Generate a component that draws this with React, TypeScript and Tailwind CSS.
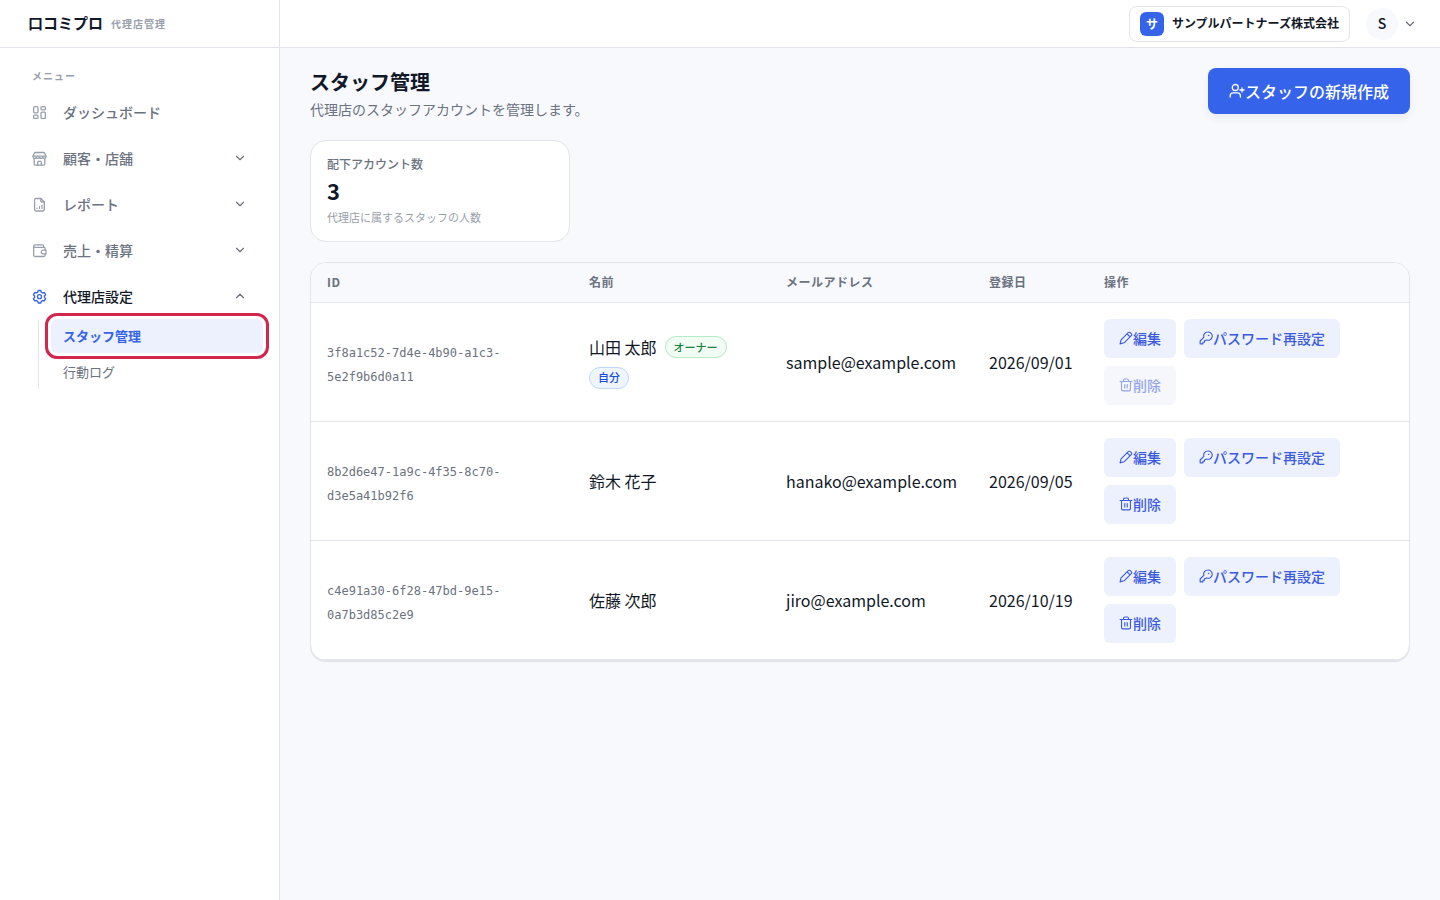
import type { ReactNode } from "react";
import clsx from "clsx";

type IconProps = { className?: string };

const Svg = ({ className, children }: IconProps & { children: ReactNode }) => (
  <svg
    xmlns="http://www.w3.org/2000/svg"
    className={clsx("shrink-0", className)}
    viewBox="0 0 16 16"
    fill="none"
    stroke="currentColor"
    strokeWidth={1.3}
    strokeLinecap="round"
    strokeLinejoin="round"
  >
    {children}
  </svg>
);

const DashboardIcon = ({ className }: IconProps) => (
  <Svg className={className}>
    <rect x="1.6" y="1.6" width="4.4" height="6.2" rx="1" />
    <rect x="1.6" y="10.2" width="4.4" height="3.2" rx="1" />
    <rect x="9" y="1.6" width="4.4" height="3.2" rx="1" />
    <rect x="9" y="7.2" width="4.4" height="6.2" rx="1" />
  </Svg>
);

const StoreIcon = ({ className }: IconProps) => (
  <Svg className={className}>
    <path d="M3.6 1.500h7.800a1.500 1.500 0 0 1 1.300.8l1.300 2.900v.6a1.600 1.600 0 0 1-3.200 0 1.650 1.650 0 0 1-3.300 0 1.650 1.650 0 0 1-3.300 0 1.600 1.600 0 0 1-3.200 0v-.6l1.300-2.900a1.500 1.500 0 0 1 1.300-.8z" />
    <path d="M1.200 5.200h12.600" />
    <path d="M2.200 8v4.700a1.400 1.400 0 0 0 1.400 1.400h7.800a1.400 1.400 0 0 0 1.400-1.400V8" />
    <path d="M5.700 14v-2.700a.9.9 0 0 1 .9-.9h1.800a.9.9 0 0 1 .9.9V14" />
  </Svg>
);

const ReportIcon = ({ className }: IconProps) => (
  <Svg className={className}>
    <path d="M8.800 1.500H4a1.400 1.400 0 0 0-1.400 1.400v9.700A1.400 1.400 0 0 0 4 14h6.900a1.400 1.400 0 0 0 1.400-1.400V5z" />
    <path d="M8.800 1.500V4a1 1 0 0 0 1 1h2.500" />
    <path d="M5 11.500v-.5M7.500 11.500V9.600M10 11.500V8.100" strokeWidth={1.2} />
  </Svg>
);

const WalletIcon = ({ className }: IconProps) => (
  <Svg className={className}>
    <path d="M13.200 6.800V5.700a1.400 1.400 0 0 0-1.400-1.400H1.700v7.800a1.400 1.400 0 0 0 1.400 1.400h8.700a1.400 1.400 0 0 0 1.400-1.400V11" />
    <path d="M1.700 4.300V3.100a1.300 1.300 0 0 1 1.300-1.300h7.400a1.300 1.300 0 0 1 1.300 1.300v1.200" />
    <path d="M14 7.100h-2.800a1.900 1.900 0 0 0 0 3.800H14z" />
  </Svg>
);

const GearIcon = ({ className }: IconProps) => (
  <Svg className={className}>
    <path d="M6.200 1.500h2.600l.5 1.700 1.200.7 1.800-.4 1.300 2.200-1.200 1.300v1.400l1.200 1.300-1.300 2.200-1.800-.4-1.200.7-.5 1.800H6.200l-.5-1.800-1.200-.7-1.800.4-1.300-2.200 1.200-1.300V7L1.400 5.700l1.300-2.200 1.800.4 1.200-.7z" />
    <circle cx="7.500" cy="7.700" r="2" />
  </Svg>
);

const UserPlusIcon = ({ className }: IconProps) => (
  <Svg className={className}>
    <circle cx="6.300" cy="4.500" r="3" />
    <path d="M1.200 14v-1.200a3 3 0 0 1 3-3h4.200a3 3 0 0 1 3 3V14" />
    <path d="M13 4.900v4.200M10.900 7h4.200" />
  </Svg>
);

const PencilIcon = ({ className }: IconProps) => (
  <Svg className={className}>
    <path d="M1.200 14.700l1.200-4.600 8.200-8.200a1.600 1.600 0 0 1 2.300 0l1.100 1.100a1.600 1.600 0 0 1 0 2.300l-8.200 8.200z" />
    <path d="M9.600 3.600l2.800 2.800" />
  </Svg>
);

const KeyIcon = ({ className }: IconProps) => (
  <Svg className={className}>
    <path d="M10 1.200a4.700 4.700 0 0 0-4.500 6L1.300 11.400v3.300h3.200v-1.800h1.800v-1.700L8.800 10.300a4.700 4.700 0 1 0 1.200-9.100z" />
    <path d="M11 5h.1" strokeWidth={1.7} />
  </Svg>
);

const TrashIcon = ({ className }: IconProps) => (
  <Svg className={className}>
    <path d="M1.200 4h13.600" />
    <path d="M2.900 4v9.100a1.600 1.600 0 0 0 1.600 1.600h7a1.600 1.600 0 0 0 1.600-1.600V4" />
    <path d="M5.200 4V2.500a1.300 1.300 0 0 1 1.300-1.300h3a1.300 1.300 0 0 1 1.300 1.300V4" />
    <path d="M6.600 7.400v4M9.400 7.400v4" />
  </Svg>
);

const ChevronIcon = ({ className }: IconProps) => (
  <svg
    xmlns="http://www.w3.org/2000/svg"
    className={clsx("h-2.5 w-2.5 shrink-0 text-[#6b7280]", className)}
    viewBox="0 0 10 10"
    fill="none"
    stroke="currentColor"
    strokeWidth={1.25}
    strokeLinecap="round"
    strokeLinejoin="round"
  >
    <path d="M1.500 3.300L5 6.700l3.500-3.400" />
  </svg>
);

const menu = [
  { label: "ダッシュボード", icon: DashboardIcon, expandable: false, open: false },
  { label: "顧客・店舗", icon: StoreIcon, expandable: true, open: false },
  { label: "レポート", icon: ReportIcon, expandable: true, open: false },
  { label: "売上・精算", icon: WalletIcon, expandable: true, open: false },
  { label: "代理店設定", icon: GearIcon, expandable: true, open: true },
];

const staff = [
  {
    id: "3f8a1c52-7d4e-4b90-a1c3-5e2f9b6d0a11",
    name: "山田 太郎",
    email: "sample@example.com",
    date: "2026/09/01",
    self: true,
  },
  {
    id: "8b2d6e47-1a9c-4f35-8c70-d3e5a41b92f6",
    name: "鈴木 花子",
    email: "hanako@example.com",
    date: "2026/09/05",
    self: false,
  },
  {
    id: "c4e91a30-6f28-47bd-9e15-0a7b3d85c2e9",
    name: "佐藤 次郎",
    email: "jiro@example.com",
    date: "2026/10/19",
    self: false,
  },
];

const Sidebar = () => (
  <aside className="flex w-[280px] shrink-0 flex-col border-r border-[#e2e4e9] bg-white">
    <div className="flex h-12 items-center gap-2 border-b border-[#e2e4e9] pl-7">
      <span className="text-[15px] font-bold">口コミプロ</span>
      <span className="pb-px text-[10px] font-bold tracking-[1px] text-[#989fac]">
        代理店管理
      </span>
    </div>

    <p className="h-[42px] pt-5 pl-8 text-[10px] leading-4 font-bold tracking-[1px] text-[#989fac]">
      メニュー
    </p>

    <nav>
      {menu.map(({ label, icon: Icon, expandable, open }) => (
        <button
          key={label}
          className={clsx(
            "flex h-[46px] w-full items-center pr-[34px] pb-0.5 pl-8 text-sm font-medium",
            open ? "text-[#111827]" : "text-[#6b7280]"
          )}
        >
          <Icon
            className={clsx(
              "mt-0.5 mr-[15px] h-4 w-4",
              open ? "text-[#3563e9]" : "text-[#989fac]"
            )}
          />
          {label}
          {expandable && (
            <ChevronIcon className={clsx("ml-auto", open && "rotate-180")} />
          )}
        </button>
      ))}

      <ul className="-mt-px mr-4 ml-[38px] flex flex-col gap-0.5 border-l border-[#e2e4e9] pl-3 text-[13px]">
        <li className="flex h-[34px] items-center rounded-md bg-[#edf1fd] px-3 pb-px font-bold text-[#3563e9] outline-3 outline-offset-3 outline-[#d3264f]">
          スタッフ管理
        </li>
        <li className="flex h-[34px] items-center px-3 pb-px text-[#6b7280]">
          行動ログ
        </li>
      </ul>
    </nav>
  </aside>
);

const Header = () => (
  <header className="flex h-12 shrink-0 items-center justify-end border-b border-[#e2e4e9] bg-white pr-[25px]">
    <div className="flex h-9 items-center gap-2 rounded-lg border border-[#e2e4e9] px-2.5">
      <span className="flex h-6 w-6 items-center justify-center rounded-md bg-[#3563e9] text-xs font-bold text-white">
        サ
      </span>
      <span className="pb-0.5 text-xs font-bold">サンプルパートナーズ株式会社</span>
    </div>
    <span className="ml-4 flex h-8 w-8 items-center justify-center rounded-full bg-[#f7f9fd] pb-px text-sm font-medium">
      S
    </span>
    <ChevronIcon className="ml-[7px]" />
  </header>
);

type ActionButtonProps = {
  icon: ReactNode;
  label: string;
  disabled?: boolean;
};

const ActionButton = ({ icon, label, disabled }: ActionButtonProps) => (
  <button
    disabled={disabled}
    className="flex h-[39px] items-center rounded-md bg-[#edf1fd] px-[15px] pb-0.5 text-sm font-medium text-[#3b5bdb] disabled:opacity-55"
  >
    {icon}
    {label}
  </button>
);

const StaffTable = () => (
  <div className="mt-5 overflow-hidden rounded-2xl border border-[#e2e4e9] bg-white shadow-[0_1px_1px_rgba(16,24,40,0.1)]">
    <table className="w-full table-fixed border-separate border-spacing-0 text-left">
      <colgroup>
        <col className="w-[262px]" />
        <col className="w-[197px]" />
        <col className="w-[203px]" />
        <col className="w-[115px]" />
        <col />
      </colgroup>
      <thead>
        <tr className="h-10 bg-[#f7f9fd] text-xs tracking-[0.5px] text-[#6b7280]">
          {["ID", "名前", "メールアドレス", "登録日", "操作"].map((title) => (
            <th
              key={title}
              className="border-b border-[#e2e4e9] px-4 pt-0 pb-0.5 font-bold"
            >
              {title}
            </th>
          ))}
        </tr>
      </thead>
      <tbody>
        {staff.map((member) => (
          <tr
            key={member.id}
            className="h-[119px] *:border-b *:border-[#e2e4e9] *:px-4 *:py-0"
          >
            <td>
              <div className="w-[180px] pt-1.5 font-['DejaVu_Sans_Mono',monospace] text-xs leading-6 text-[#6b7280]">
                {member.id}
              </div>
            </td>
            <td>
              <div className="flex flex-wrap items-center gap-2 leading-[23px]">
                {member.name}
                {member.self && (
                  <>
                    <span className="flex h-[22px] items-center rounded-full border border-[#b5ecc8] bg-[#f0fcf4] px-2 text-[11px] font-medium text-[#18803d]">
                      オーナー
                    </span>
                    <span className="flex h-[22px] items-center rounded-full border border-[#bfd8fb] bg-[#eef5ff] px-2 text-[11px] font-medium text-[#1d4ed8]">
                      自分
                    </span>
                  </>
                )}
              </div>
            </td>
            <td>{member.email}</td>
            <td>{member.date}</td>
            <td>
              <div className="flex flex-wrap gap-2">
                <ActionButton icon={<PencilIcon className="h-3.5 w-3.5" />} label="編集" />
                <ActionButton
                  icon={<KeyIcon className="h-3.5 w-3.5" />}
                  label="パスワード再設定"
                />
                <ActionButton
                  icon={<TrashIcon className="h-3.5 w-3.5" />}
                  label="削除"
                  disabled={member.self}
                />
              </div>
            </td>
          </tr>
        ))}
      </tbody>
    </table>
  </div>
);

const App = () => {
  return (
    <div className="flex h-screen bg-[#f7f9fd] font-['Noto_Sans_CJK_JP',sans-serif] text-[#111827]">
      <Sidebar />

      <div className="flex min-w-0 flex-1 flex-col">
        <Header />

        <main className="px-[30px] pt-5">
          <div className="flex items-start justify-between">
            <div>
              <h1 className="text-xl leading-7 font-bold">スタッフ管理</h1>
              <p className="mt-px text-sm leading-6 text-[#6b7280]">
                代理店のスタッフアカウントを管理します。
              </p>
            </div>
            <button className="flex h-[46px] items-center rounded-lg bg-[#3563e9] px-[21px] font-medium text-white shadow-[0_4px_10px_rgba(16,24,40,0.06)]">
              <UserPlusIcon className="h-4 w-4" />
              スタッフの新規作成
            </button>
          </div>

          <div className="mt-[19px] h-[102px] w-[260px] rounded-2xl border border-[#e2e4e9] bg-white px-4 pt-[14px]">
            <p className="text-xs leading-[18px] font-medium text-[#6b7280]">
              配下アカウント数
            </p>
            <p className="mt-px text-[22px] leading-8 font-bold">3</p>
            <p className="mt-[3px] text-[11px] leading-4 text-[#989fac]">
              代理店に属するスタッフの人数
            </p>
          </div>

          <StaffTable />
        </main>
      </div>
    </div>
  );
};

export default App;
